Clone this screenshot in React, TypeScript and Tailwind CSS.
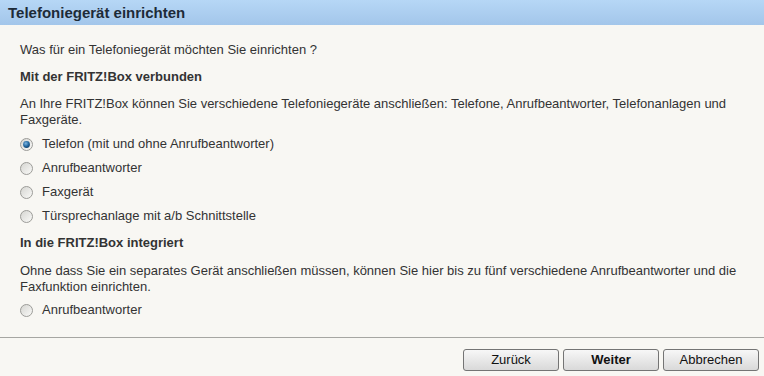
import React from 'react'

function Radio({ checked }: { checked?: boolean }) {
    return (
        <svg width="13" height="13" viewBox="0 0 13 13" className="shrink-0">
            <defs>
                <linearGradient id="rg" x1="0" y1="0" x2="1" y2="1">
                    <stop offset="0" stopColor="#d4d4d0" />
                    <stop offset="1" stopColor="#fbfbf9" />
                </linearGradient>
                <radialGradient id="dot" cx="0.4" cy="0.35" r="0.7">
                    <stop offset="0" stopColor="#7eb6e2" />
                    <stop offset="0.6" stopColor="#22679f" />
                    <stop offset="1" stopColor="#123f6a" />
                </radialGradient>
            </defs>
            <circle cx="6.5" cy="6.5" r="6" fill="url(#rg)" stroke="#9c9c98" strokeWidth="1" />
            {checked && <circle cx="6.5" cy="6.5" r="3.4" fill="url(#dot)" />}
        </svg>
    )
}

function Option({ label, checked }: { label: string; checked?: boolean }) {
    return (
        <label className="flex items-center h-4 gap-[9px]">
            <Radio checked={checked} />
            <span>{label}</span>
        </label>
    )
}

function Btn({ children, bold }: { children: React.ReactNode; bold?: boolean }) {
    return (
        <button
            className={
                bold
                    ? "w-[96px] h-[22px] rounded-[3px] border border-[#747474] bg-gradient-to-b from-[#f7f7f7] to-[#d9d9d9] text-[13px] text-[#111] font-bold"
                    : "w-[96px] h-[22px] rounded-[3px] border border-[#747474] bg-gradient-to-b from-[#f7f7f7] to-[#d9d9d9] text-[13px] text-[#111]"
            }
        >
            {children}
        </button>
    )
}

export default function App() {
    return (
        <div className="w-[764px] h-[376px] bg-[#f8f7f3] text-[13px] leading-4 text-[#333] overflow-hidden" style={{ fontFamily: '"Liberation Sans", Arial, sans-serif' }}>
            {/* Header */}
            <header className="h-[25px] bg-gradient-to-b from-[#b6d7f6] to-[#a3c6ea] flex items-center px-2">
                <h1 className="text-[15px] font-bold text-[#1d2b38]">Telefoniegerät einrichten</h1>
            </header>

            {/* Content */}
            <div className="pl-5 pr-4 pt-[17px] h-[312px]">
                <p>Was für ein Telefoniegerät möchten Sie einrichten ?</p>
                <h2 className="mt-[11px] font-bold">Mit der FRITZ!Box verbunden</h2>
                <p className="mt-[11px]">An Ihre FRITZ!Box können Sie verschiedene Telefoniegeräte anschließen: Telefone, Anrufbeantworter, Telefonanlagen und Faxgeräte.</p>
                <div className="mt-2 flex flex-col gap-2">
                    <Option label="Telefon (mit und ohne Anrufbeantworter)" checked />
                    <Option label="Anrufbeantworter" />
                    <Option label="Faxgerät" />
                    <Option label="Türsprechanlage mit a/b Schnittstelle" />
                </div>
                <h2 className="mt-[11px] font-bold">In die FRITZ!Box integriert</h2>
                <p className="mt-3">Ohne dass Sie ein separates Gerät anschließen müssen, können Sie hier bis zu fünf verschiedene Anrufbeantworter und die Faxfunktion einrichten.</p>
                <div className="mt-[7px]">
                    <Option label="Anrufbeantworter" />
                </div>
            </div>

            {/* Footer */}
            <div className="border-t border-[#a6a6a2]"></div>
            <footer className="flex justify-end gap-1 pt-[11px] pr-[5px]">
                <Btn>Zurück</Btn>
                <Btn bold>Weiter</Btn>
                <Btn>Abbrechen</Btn>
            </footer>
        </div>
    )
}
